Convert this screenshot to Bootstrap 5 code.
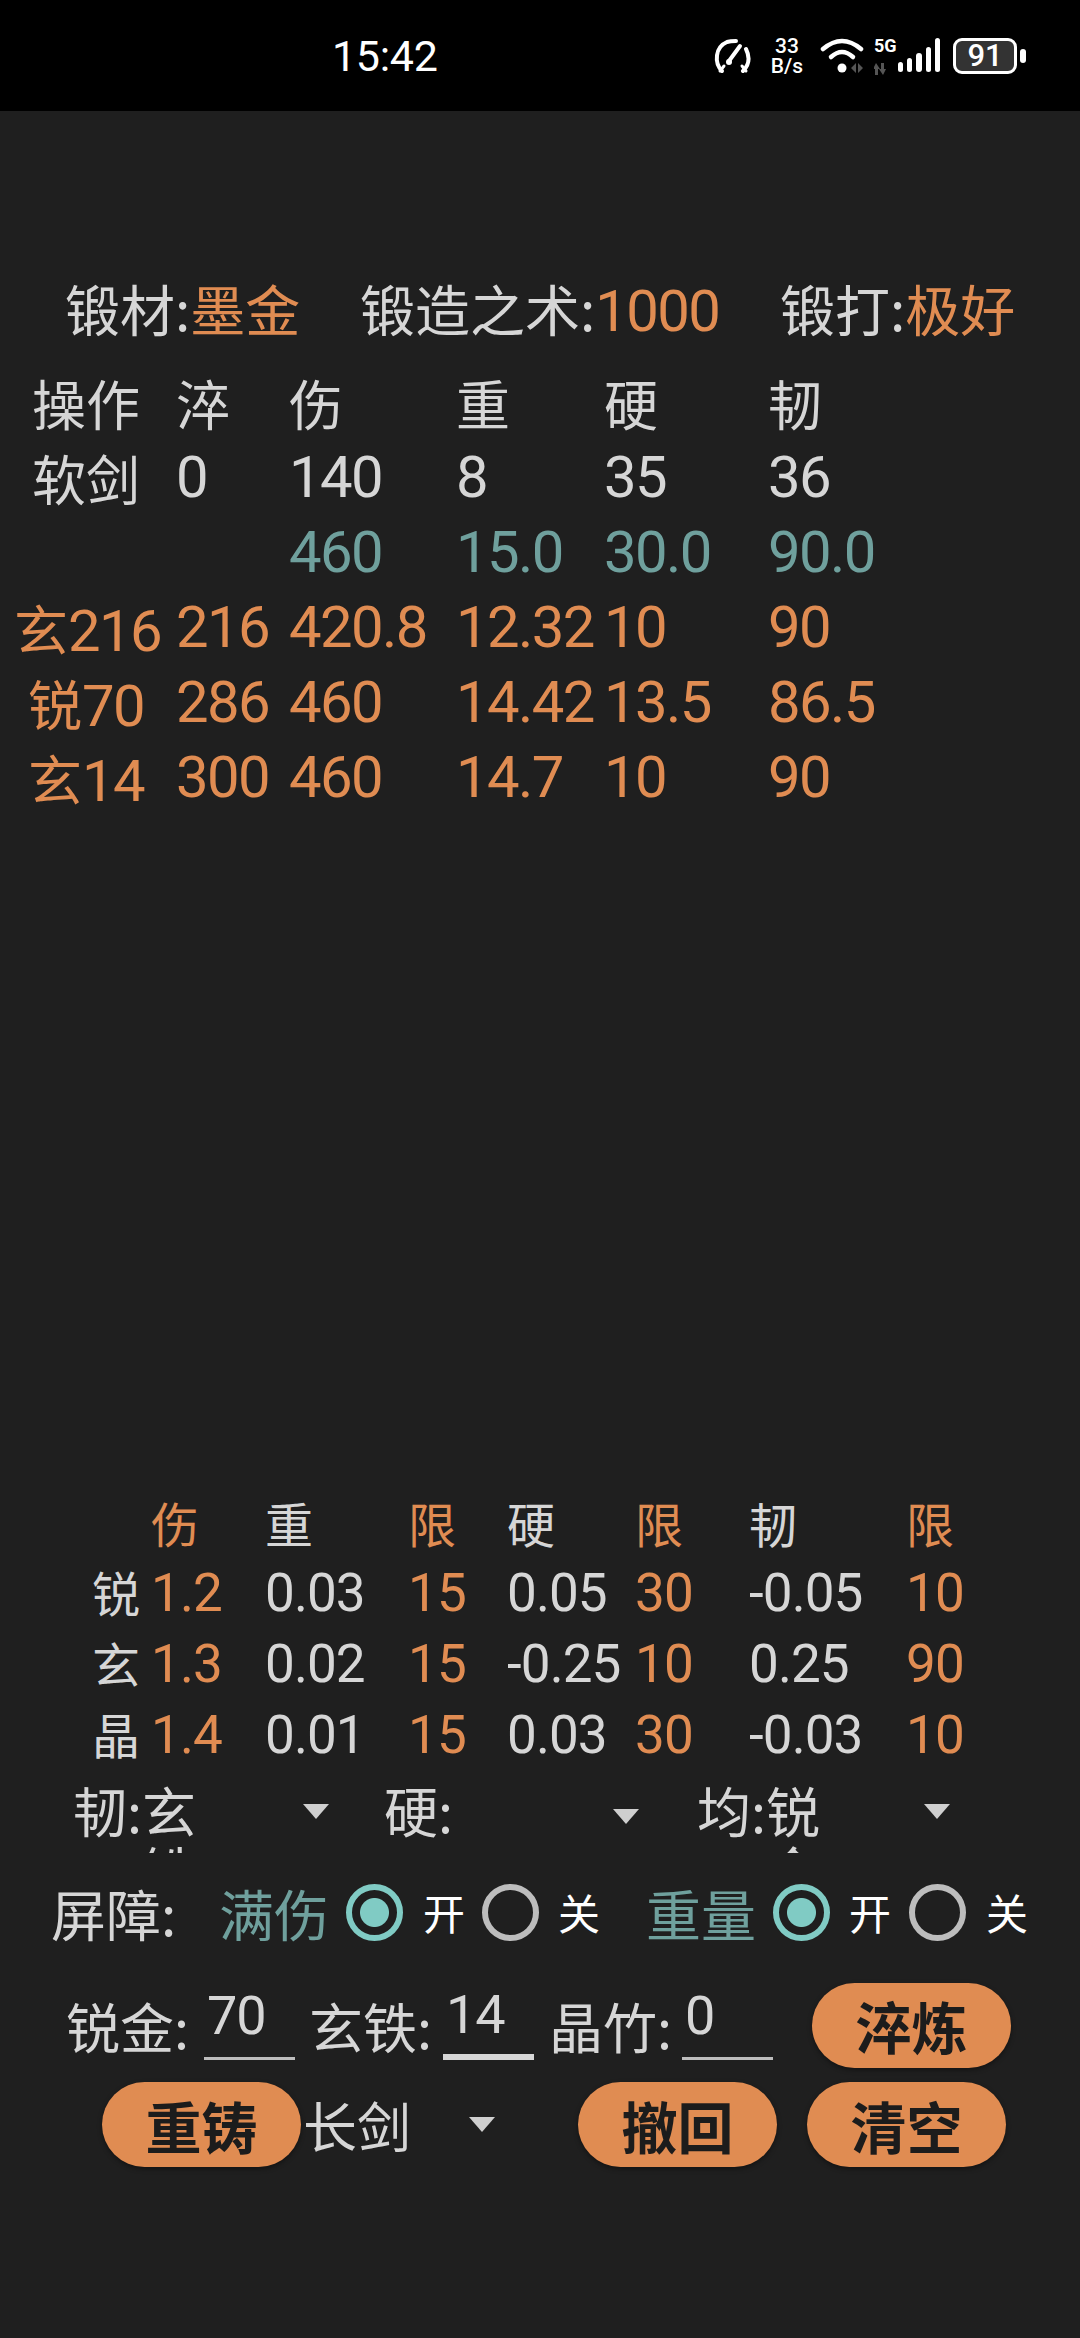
<!DOCTYPE html>
<html lang="zh-CN"><head><meta charset="utf-8"><title>锻造</title>
<link href="https://cdn.jsdelivr.net/npm/bootstrap@5.3.0/dist/css/bootstrap.min.css" rel="stylesheet">
<style>
body{background:#1f1f1f;color:#d6d6d6;font-family:"Noto Sans CJK SC","Noto Sans",sans-serif;font-weight:400;width:1080px;height:2338px;overflow:hidden}
.sbar{background:#000;height:111px;color:#fff;font-family:Roboto,sans-serif;padding-left:332px}
.clock{font-size:43px;font-weight:400;width:381px;letter-spacing:-.3px;line-height:1;padding-top:1px}
.rate{font-size:21px;line-height:20px;width:34px;margin-left:17px;font-weight:500;text-align:center}
.fiveg{font-size:18px;font-weight:700;line-height:1;width:24px}
.batt{width:64px;height:36px;border:3px solid #fff;border-radius:9px;background:#333;font-size:31px;font-weight:500;line-height:1;margin-left:11px}
.nub{width:6px;height:14px;background:#fff;border-radius:3px;margin-left:3px}
.nm{font-family:Roboto,sans-serif;font-weight:400;font-size:58px;letter-spacing:-1.6px}
.nmb{font-family:Roboto,sans-serif;font-weight:400;font-size:53px;letter-spacing:-.9px}
.org{color:#e08c52}.teal{color:#6fa09d}
.ttl{display:grid;grid-template-columns:295px 420px 1fr;padding-left:65px;margin-top:164px;font-size:55px;line-height:64px;height:64px}
.tb1{display:grid;grid-template-columns:162px 113px 167px 148px 164px 1fr;padding-left:14px;margin-top:26px;font-size:54px;grid-auto-rows:75px;line-height:75px}
.tb1>div{white-space:nowrap}
.tb1 .hd{text-align:center;padding-right:18px}
.tb2{display:grid;grid-template-columns:59px 114px 143px 99px 128px 114px 157px 1fr;padding-left:92px;margin-top:672px;font-size:48px;grid-auto-rows:71px;line-height:71px}
.tb2>div{white-space:nowrap}
.tb2 .cj{line-height:67px}
.spn{display:grid;grid-template-columns:311px 313px 253px;padding-left:73px;padding-top:2px;margin-top:7px;height:75px;overflow:hidden;font-size:54px;line-height:60px}
.spc{display:flex}
.spv{width:58px}
.tri{width:0;height:0;border-left:13px solid transparent;border-right:13px solid transparent;border-top:15px solid #cfcfcf;margin-left:auto;flex:none}
.tri-a{margin-top:24px}.tri-b{margin-top:29px}
.pe1{padding-right:55px}.pe2{padding-right:58px}
.rad{display:grid;grid-template-columns:168px 127px 77px 59px 76px 88px 127px 76px 60px 77px 1fr;padding-left:51px;margin-top:27px;font-size:55px;line-height:64px;height:64px;align-items:center}
.rlb{font-size:42px;color:#fff}
.rad .form-check-input{width:57px;height:57px;margin:0;background:transparent;border:6px solid #bdbdbd;border-radius:50%;box-shadow:none}
.rad .form-check-input:checked{border-color:#80cbc4;background:radial-gradient(circle,#80cbc4 0 14px,transparent 15px)}
.inp{display:grid;grid-template-columns:138px 105px 134px 106px 133px 130px 199px;padding-left:66px;margin-top:38px;font-size:54px;height:86px;align-items:center}
.inp .form-control{background:transparent;border:0;border-bottom:3px solid #bdbdbd;border-radius:0;height:78px;width:91px;color:#d6d6d6;padding:0 0 8px 3px;box-shadow:none;align-self:start;font-family:Roboto,sans-serif;font-weight:400;font-size:54px;letter-spacing:-1px;line-height:1}
.inp .form-control.act{border-bottom:6px solid #d6d6d6}
.acts{display:grid;grid-template-columns:201px 275px 229px 199px;padding-left:102px;margin-top:14px;height:85px;align-items:center;font-size:54px}
.pbtn{background:#e08c52;border:0;border-radius:43px;color:#1c1c1c;font-size:56px;font-weight:700;height:85px;width:199px;padding:0;box-shadow:0 2px 5px rgba(0,0,0,.4);line-height:1}
.pbtn:hover{background:#e08c52;color:#1c1c1c}
.wpk{width:166px}
</style></head><body>
<div class="sbar d-flex align-items-center">
  <div class="clock">15:42</div>
  <svg width="40" height="36" viewBox="0 0 40 36" fill="none" stroke="#fff" stroke-width="4" stroke-linecap="round"><path d="M9 33C1 25 2 9 14 4c3-1 6-1 9-1"/><path d="M33 11c4 8 3 16-3 22"/><path d="M27 8 16 23"/><circle cx="16" cy="24" r="3" fill="#fff" stroke="none"/><path d="M7 33l4-5M33 33l-4-5" stroke-width="3"/></svg>
  <div class="rate">33<br>B/s</div>
  <svg class="ms-3" width="46" height="38" viewBox="0 0 46 38" fill="none" stroke="#fff" stroke-width="4.5" stroke-linecap="round"><path d="M3 12Q22-4 41 12"/><path d="M11 20Q22 10 33 20"/><circle cx="22" cy="31" r="4.5" fill="#fff" stroke="none"/><path d="M31 31l5-5v10zM38 26l5 5-5 5z" fill="#555" stroke="none"/></svg>
  <div class="fiveg ms-2 d-flex flex-column align-self-center"><span>5G</span><svg width="20" height="12" viewBox="0 0 20 12" class="mt-2"><path d="M2 0l4 6H4v6H1V6H-1zM9 12l-4-6h2V0h3v6h2z" fill="#555"/></svg></div>
  <svg width="44" height="36" viewBox="0 0 44 36" fill="#fff"><rect x="0" y="24" width="5" height="10" rx="2.5"/><rect x="9" y="20" width="5" height="14" rx="2.5"/><rect x="18" y="15" width="6" height="19" rx="3"/><rect x="28" y="9" width="5" height="25" rx="2.5"/><rect x="37" y="0" width="5" height="34" rx="2.5"/></svg>
  <div class="batt d-flex align-items-center justify-content-center">91</div><div class="nub"></div>
</div>

<div class="ttl">
  <div>锻材:<span class="org">墨金</span></div>
  <div>锻造之术:<span class="org nm">1000</span></div>
  <div>锻打:<span class="org">极好</span></div>
</div>

<div class="tb1">
  <div class="hd">操作</div><div>淬</div><div>伤</div><div>重</div><div>硬</div><div>韧</div>
  <div class="hd">软剑</div><div class="nm">0</div><div class="nm">140</div><div class="nm">8</div><div class="nm">35</div><div class="nm">36</div>
  <div></div><div></div><div class="nm teal">460</div><div class="nm teal">15.0</div><div class="nm teal">30.0</div><div class="nm teal">90.0</div>
  <div class="hd org">玄<span class="nm">216</span></div><div class="nm org">216</div><div class="nm org">420.8</div><div class="nm org">12.32</div><div class="nm org">10</div><div class="nm org">90</div>
  <div class="hd org">锐<span class="nm">70</span></div><div class="nm org">286</div><div class="nm org">460</div><div class="nm org">14.42</div><div class="nm org">13.5</div><div class="nm org">86.5</div>
  <div class="hd org">玄<span class="nm">14</span></div><div class="nm org">300</div><div class="nm org">460</div><div class="nm org">14.7</div><div class="nm org">10</div><div class="nm org">90</div>
</div>

<div class="tb2">
  <div></div><div class="org">伤</div><div>重</div><div class="org">限</div><div>硬</div><div class="org">限</div><div>韧</div><div class="org">限</div>
  <div class="cj">锐</div><div class="nmb org">1.2</div><div class="nmb">0.03</div><div class="nmb org">15</div><div class="nmb">0.05</div><div class="nmb org">30</div><div class="nmb">-0.05</div><div class="nmb org">10</div>
  <div class="cj">玄</div><div class="nmb org">1.3</div><div class="nmb">0.02</div><div class="nmb org">15</div><div class="nmb">-0.25</div><div class="nmb org">10</div><div class="nmb">0.25</div><div class="nmb org">90</div>
  <div class="cj">晶</div><div class="nmb org">1.4</div><div class="nmb">0.01</div><div class="nmb org">15</div><div class="nmb">0.03</div><div class="nmb org">30</div><div class="nmb">-0.03</div><div class="nmb org">10</div>
</div>

<div class="spn">
  <div class="spc pe1"><span>韧:</span><span class="spv">玄铁</span><i class="tri tri-a"></i></div>
  <div class="spc pe2"><span>硬:</span><i class="tri tri-b"></i></div>
  <div class="spc"><span>均:</span><span class="spv">锐金</span><i class="tri tri-a"></i></div>
</div>

<div class="rad">
  <div>屏障:</div><div class="teal">满伤</div>
  <input class="form-check-input" type="radio" name="a" checked aria-label="开"><span class="rlb">开</span>
  <input class="form-check-input" type="radio" name="a" aria-label="关"><span class="rlb">关</span>
  <div class="teal">重量</div>
  <input class="form-check-input" type="radio" name="b" checked aria-label="开"><span class="rlb">开</span>
  <input class="form-check-input" type="radio" name="b" aria-label="关"><span class="rlb">关</span>
</div>

<div class="inp">
  <div>锐金:</div><input class="form-control" value="70" aria-label="锐金">
  <div>玄铁:</div><input class="form-control act" value="14" aria-label="玄铁">
  <div>晶竹:</div><input class="form-control" value="0" aria-label="晶竹">
  <button class="btn pbtn">淬炼</button>
</div>

<div class="acts">
  <button class="btn pbtn">重铸</button>
  <div class="d-flex align-items-center"><span class="wpk">长剑</span><i class="tri ms-0"></i></div>
  <button class="btn pbtn">撤回</button>
  <button class="btn pbtn">清空</button>
</div>
</body></html>
